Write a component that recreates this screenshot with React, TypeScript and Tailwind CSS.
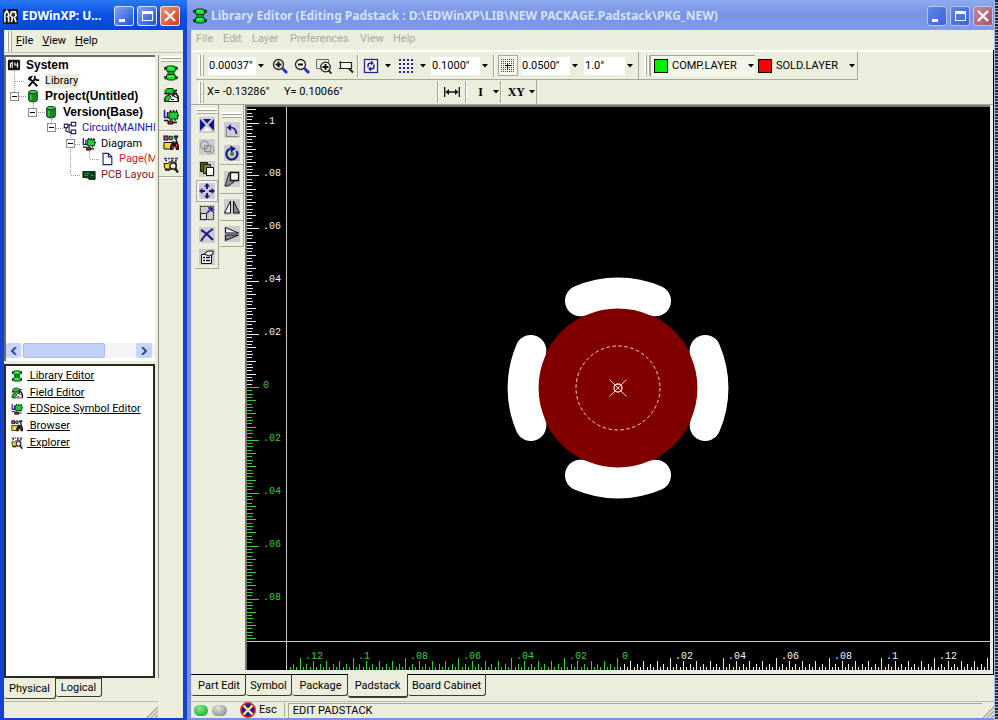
import type { ReactNode } from "react";

const UI = "font-['Roboto','Liberation_Sans',sans-serif] text-[11px] leading-[14px]";
const TITLE = "font-['Noto_Sans','Open_Sans',sans-serif] text-[12px] leading-[16px] font-bold";

/* ---------- icons ---------- */

type IconProps = { size?: number };

function Svg({ size = 16, children, crisp = false }: IconProps & { children: ReactNode; crisp?: boolean }) {
  return (
    <svg width={size} height={size} viewBox="0 0 16 16" fill="none" aria-hidden="true" className="shrink-0" shapeRendering={crisp ? "crispEdges" : "auto"}>
      {children}
    </svg>
  );
}

function ChipIcon({ size }: IconProps) {
  return (
    <Svg size={size}>
      <path d="M1.500 2.500h13M1.500 13.500h13M2 2.500v2.500M14 2.500v2.500M2 11v2.500M14 11v2.500" stroke="#111" strokeWidth="1.400" />
      <rect x="3.500" y="1" width="9" height="6" rx="2" fill="#14dc2e" stroke="#06360b" />
      <rect x="3.500" y="9" width="9" height="6" rx="2" fill="#14dc2e" stroke="#06360b" />
      <path d="M5 6.500h6v3H5z" fill="#0da522" stroke="#06360b" strokeWidth="0.800" />
      <path d="M5.500 3h4M5.500 11.500h4" stroke="#8dff92" />
    </Svg>
  );
}

function FieldIcon({ size }: IconProps) {
  return (
    <Svg size={size}>
      <path d="M2 3.500 4 1.500h6l2 2-1 3H3z" fill="#19c92f" stroke="#0a3a10" />
      <path d="M1 6.500h3M10 5l4-2" stroke="#111" strokeWidth="1.400" />
      <path d="M1.500 14.500c-1-4 2-7 6-7.500l3 2 4 2 1 3.500z" fill="#fff" stroke="#111" />
      <path d="M2 13.500c0-3 2-5 4.500-5.500l1.500 2.500-3.500 4z" fill="#19c92f" stroke="#0a3a10" />
      <path d="M9 9l4-3 2.500 4.500v4" stroke="#111" strokeWidth="1.600" />
      <path d="M8 12.500h3" stroke="#111" />
    </Svg>
  );
}

function SymbolIcon({ size }: IconProps) {
  return (
    <Svg size={size}>
      <path d="M1.500 1v8M1.500 8.500H6M4.500 3v5" stroke="#1c1c8c" strokeWidth="1.500" />
      <path d="M6 3h8.500v7H6z" fill="#17cf32" stroke="#06360b" />
      <path d="M7.500 1v2M10.500 1v2M13.500 1v2M14.500 6.500H16M8 10v1.500M12 10v2" stroke="#111" strokeWidth="1.300" />
      <path d="M5 12h5v3H5z" fill="#b3211d" stroke="#111" />
      <path d="M10 13.500h4M1 11.500h4" stroke="#111" strokeWidth="1.300" />
    </Svg>
  );
}

function BrowserIcon({ size }: IconProps) {
  return (
    <Svg size={size}>
      <rect x="1" y="1" width="4" height="4" fill="#e31fd0" stroke="#111" />
      <circle cx="8" cy="3" r="2" fill="#19c92f" stroke="#111" />
      <path d="M11 1h4l-2 4z" fill="#2334c9" stroke="#111" />
      <path d="M1 7.500h8V14H1z" fill="#f3dd2a" stroke="#111" />
      <path d="M7 15v-4l3-5h1l1 2 1-3h1l2 6v4h-3l-1-4-2 4z" fill="#161616" />
      <path d="M13.500 9v3.500M9.500 10.500v3" stroke="#d8302a" />
    </Svg>
  );
}

function ExplorerIcon({ size }: IconProps) {
  return (
    <Svg size={size}>
      <path d="M1 1.500h3M5 1.500h2M8 1.500h3M12 1.500h3M2 3.500h2M8 3.500h2M12 3.500h2" stroke="#3d2a8c" strokeWidth="1.600" />
      <path d="M1 6.500h4l1-1.500h7v7H2z" fill="#f3dd2a" stroke="#111" />
      <circle cx="10" cy="9" r="3.200" fill="#e8e6d4" stroke="#111" strokeWidth="1.300" />
      <path d="m12 11.500 3 4" stroke="#111" strokeWidth="2.200" />
      <path d="M2 13h5" stroke="#111" strokeWidth="1.500" />
    </Svg>
  );
}

function AppIcon() {
  return (
    <Svg size={15}>
      <rect width="16" height="16" fill="#151515" />
      <path d="M2 14V5l2-3 2 3v9M4 8h2M9 14l1-5-2-2 1-4h4l1 4-2 2 2 5" stroke="#f4f4f4" strokeWidth="1.800" />
      <path d="M11 4v3" stroke="#d43a2a" />
    </Svg>
  );
}

function SystemIcon() {
  return (
    <Svg size={14}>
      <rect x="1" y="2" width="14" height="12" rx="1.500" fill="#141414" />
      <path d="M4 11V6.500L6 5v6M9 5v3h4M12 5v6" stroke="#f3f3f3" strokeWidth="1.300" />
    </Svg>
  );
}

function ToolsIcon() {
  return (
    <Svg size={14}>
      <path d="m3 14 8-9M13 14 6 7" stroke="#111" strokeWidth="2.200" />
      <path d="M2 6c1-3 3-4 6-4L6 5l1 2-2 1z" fill="#111" />
      <path d="M10 2v3l2 2h3" stroke="#111" strokeWidth="2" />
    </Svg>
  );
}

function CanIcon() {
  return (
    <Svg size={14}>
      <path d="M3 3.500v9c0 3 10 3 10 0v-9z" fill="#158a25" stroke="#073d10" />
      <ellipse cx="8" cy="3.500" rx="5" ry="2" fill="#3fc651" stroke="#073d10" />
      <path d="M5.500 6.500v6" stroke="#47d45c" strokeWidth="1.500" />
    </Svg>
  );
}

function CircuitIcon() {
  return (
    <Svg size={14}>
      <path d="M1.500 3.500h4v4h-4zM9.500 1.500h5v4h-5zM9.500 10.500h5v4h-5z" fill="#fff" stroke="#1f1f66" strokeWidth="1.300" />
      <path d="M5.500 4.500h4M7 5v8h2.500M3.500 8v4H6" stroke="#1f1f66" strokeWidth="1.300" />
    </Svg>
  );
}

function PageIcon() {
  return (
    <Svg size={14}>
      <path d="M3.500 1.500h6l4 4v9h-10z" fill="#fff" stroke="#23236e" strokeWidth="1.300" />
      <path d="M9.500 1.500v4h4" stroke="#23236e" strokeWidth="1.300" />
    </Svg>
  );
}

function PcbIcon() {
  return (
    <Svg size={14}>
      <path d="M1 4h14v9H8l-2-2H1z" fill="#0b3d17" stroke="#05200b" />
      <path d="M3 6h6M3 8.500h4M10 8.500h3" stroke="#23a03b" strokeWidth="1.300" />
    </Svg>
  );
}

function ZoomIcon({ plus = false }: { plus?: boolean }) {
  return (
    <Svg>
      <path d="m10.500 10.500 4.500 4.500" stroke="#2330d8" strokeWidth="2.800" />
      <circle cx="6.500" cy="6.500" r="5" fill="#f7f7ee" stroke="#222" strokeWidth="1.300" />
      <path d={plus ? "M3.500 6.500h6M6.500 3.500v6" : "M4 6.500h5"} stroke="#111" strokeWidth="2" />
    </Svg>
  );
}

function ZoomAreaIcon() {
  return (
    <Svg>
      <path d="M.5 10.500v-9h12v3M.5 10.500h4" stroke="#666" />
      <circle cx="9.500" cy="9" r="4.800" fill="#f7f7ee" stroke="#222" strokeWidth="1.300" />
      <path d="M6.500 9h6M9.500 6v6" stroke="#111" strokeWidth="1.800" />
      <path d="m12.500 12.500 3 3" stroke="#222" strokeWidth="1.800" />
    </Svg>
  );
}

function ZoomBoxIcon() {
  return (
    <Svg>
      <path d="M2.500 4.500h11v6h-11z" fill="#f7f7ee" stroke="#222" strokeWidth="1.200" />
      <path d="M1 4.500h3M2.500 3v3M1 10.500h3" stroke="#222" />
      <path d="m11 10.500 4 4" stroke="#222" strokeWidth="2" />
    </Svg>
  );
}

function RefreshIcon() {
  return (
    <Svg>
      <rect x="1.500" y="1.500" width="13" height="13" fill="#f5f8ff" stroke="#26268c" strokeWidth="1.300" />
      <path d="M5 9.500V7.500C5 6 6 5 8 5h1M11 6.500v2c0 1.500-1 2.500-3 2.500H7" stroke="#26268c" strokeWidth="1.500" />
      <path d="M8 2.500 11 5 8 7.500zM8 8.500 5 11l3 2.500z" fill="#26268c" />
    </Svg>
  );
}

function GridIcon() {
  return (
    <Svg crisp>
      {[1, 5, 9, 13].map((y) => [1, 5, 9, 13].map((x) => <rect key={`${x}-${y}`} x={x} y={y} width="2" height="2" fill="#26268c" />))}
    </Svg>
  );
}

function SnapIcon() {
  return (
    <Svg crisp>
      {[1, 3, 5, 7, 9, 11, 13].map((y) => [1, 3, 5, 7, 9, 11, 13].map((x) => <rect key={`${x}-${y}`} x={x} y={y} width="1" height="1" fill="#444" />))}
      <path d="M5 7.500h6M7.500 5v6" stroke="#111" strokeWidth="1.500" />
    </Svg>
  );
}

function WidthIcon() {
  return (
    <Svg>
      <path d="M.7 3v10M15.300 3v10M2 8h12" stroke="#111" strokeWidth="1.300" />
      <path d="M1.500 8 5 5v6zM14.500 8 11 5v6z" fill="#111" />
    </Svg>
  );
}

function Plate({ children }: { children: ReactNode }) {
  return (
    <Svg>
      <rect width="16" height="16" fill="#cbcbd0" />
      {children}
    </Svg>
  );
}

const NAVY = "#17178a";

const editTools: { name: string; icon: ReactNode; active?: boolean }[] = [
  { name: "Fit", icon: <Plate><path d="M1 2l5.500 6L1 14zM15 2 9.500 8l5.500 6zM4 2h8L8 6.500z" fill={NAVY} /><path d="M4 14h8l-4-4.500z" fill="#fff" /></Plate> },
  { name: "Combine", icon: <Plate><circle cx="5.500" cy="6" r="4" stroke="#888" /><path d="M5.500 6.500h6v6h-6z" stroke="#888" /><circle cx="11" cy="10.500" r="4" stroke="#999" /></Plate> },
  { name: "Copy", icon: <Plate><path d="M1.500 1.500h7v9h-7z" fill="#55611b" stroke="#1a1f05" /><path d="M4.500 3.500h7v9h-7z" fill="#7a8830" stroke="#1a1f05" /><path d="M7.500 6.500h7v8h-7z" fill="#fff" stroke="#111" /></Plate> },
  { name: "Move", active: true, icon: <Plate><path d="M8 0l3 3.500H9V6H7V3.500H5zM8 16l3-3.500H9V10H7v2.500H5zM0 8l3.500-3v2H6v2H3.500v2zM16 8l-3.500-3v2H10v2h2.500v2z" fill={NAVY} /></Plate> },
  { name: "Resize", icon: <Plate><path d="M1.500 1.500h13v13h-13z" stroke="#222" strokeDasharray="2 1" /><path d="M1.500 8.500h6v6h-6z" fill="#ddd" stroke="#222" /><path d="m8 8 5-5M9 3h4v4" stroke={NAVY} strokeWidth="1.500" /></Plate> },
  { name: "Delete", icon: <Plate><path d="M2 3c4 2 8 6 12 10M14 2C9 5 5 9 2 14" stroke={NAVY} strokeWidth="2" /></Plate> },
  { name: "Properties", icon: <Plate><path d="M2.500 5.500h10v9h-10z" fill="#fff" stroke="#111" /><path d="M4 8.500h2M7 8.500h4M4 11.500h2M7 11.500h4" stroke="#111" strokeWidth="1.300" /><path d="M5 5l4-3h5v3l-4 2z" fill="#eee" stroke="#111" /></Plate> },
];

const turnTools: { name: string; icon: ReactNode; cell: string }[] = [
  { name: "Rotate left", cell: "h-[23px]", icon: <Plate><path d="M2.500 4v10.500h12" stroke="#888" /><path d="M6 5.500c4-.5 6 2 6.500 6.500" stroke={NAVY} strokeWidth="1.500" /><path d="M3 5.500 7 2v7z" fill={NAVY} /></Plate> },
  { name: "Rotate", cell: "h-[24px] border-b border-[#aca899]", icon: <Plate><path d="M6 3.800A5.500 5.500 0 1 0 12.500 6" stroke={NAVY} strokeWidth="2.200" /><path d="M6 0.500l6 3-5 4z" fill={NAVY} /><circle cx="8" cy="9" r="2" fill="#149a27" /></Plate> },
  { name: "Skew", cell: "h-[29px] border-b border-[#aca899]", icon: <Plate><path d="M1 15 5 2h5v9L4 15z" fill="#8b8b8b" stroke="#222" /><path d="M6.500 1.500h8v8h-8z" fill="#fff" stroke="#111" strokeWidth="1.300" /></Plate> },
  { name: "Mirror horizontally", cell: "h-[27px] border-b border-[#aca899]", icon: <Plate><path d="M6.500 2v12h-6z" fill="#fff" stroke="#111" /><path d="M9.500 2v12h6z" fill="#888" stroke="#111" /></Plate> },
  { name: "Mirror vertically", cell: "h-[26px] border-b border-[#aca899]", icon: <Plate><path d="M1.500 1.500v5.500h13z" fill="#eee" stroke="#111" /><path d="M1.500 14.500V9h13z" fill="#888" stroke="#111" /></Plate> },
];

/* ---------- small parts ---------- */

function Arrow() {
  return (
    <svg width="9" height="6" viewBox="0 0 9 6" className="pointer-events-none shrink-0" aria-hidden="true">
      <path d="M2 1h6L5 4.500z" fill="#000" />
    </svg>
  );
}

function Combo({ label, value, width }: { label: string; value: string; width: string }) {
  return (
    <label className="flex items-center">
      <select aria-label={label} className={`${width} h-[18px] appearance-none pl-px text-[11px] leading-[18px] text-black outline-none`}>
        <option>{value}</option>
      </select>
      <Arrow />
    </label>
  );
}

function Sep() {
  return <span className="h-[22px] w-[2px] shrink-0 border-l border-[#aca899] bg-white" />;
}

function Grip() {
  return (
    <span className="flex h-[21px] w-[6px] shrink-0 gap-px">
      <span className="w-[3px] border-r border-[#aca899] bg-white" />
      <span className="w-[2px] border-r border-[#aca899] bg-white" />
    </span>
  );
}

function GripH() {
  return (
    <span className="flex h-[6px] w-[20px] shrink-0 flex-col gap-px">
      <span className="h-[3px] border-b border-[#aca899] bg-white" />
      <span className="h-[2px] border-b border-[#aca899] bg-white" />
    </span>
  );
}

function CaptionButtons({ active }: { active: boolean }) {
  const blue = active
    ? "border-white/80 bg-linear-to-br from-[#7ea2f5] to-[#2450d8]"
    : "border-[#b4c5f3] bg-linear-to-br from-[#5f86e8] to-[#3d63d8]";
  const red = active
    ? "border-white/80 bg-linear-to-br from-[#f0906f] to-[#cf3a14]"
    : "border-[#b4c5f3] bg-linear-to-br from-[#c28a9c] to-[#a95468]";
  const shape = "flex h-[20px] w-[20px] items-center justify-center rounded-[3px] border";
  return (
    <div className="flex shrink-0 gap-[3px]">
      <button aria-label="Minimize" className={`${shape} ${blue}`}>
        <svg width="14" height="14" aria-hidden="true"><path d="M2 10h6v3H2z" fill="#fff" /></svg>
      </button>
      <button aria-label="Maximize" className={`${shape} ${blue}`}>
        <svg width="14" height="14" aria-hidden="true"><path d="M2 2h11v10H2zm1 3v6h9V5z" fill="#fff" fillRule="evenodd" /></svg>
      </button>
      <button aria-label="Close" className={`${shape} ${red}`}>
        <svg width="14" height="14" aria-hidden="true"><path d="m2 2 10 10M12 2 2 12" stroke="#fff" strokeWidth="2.200" /></svg>
      </button>
    </div>
  );
}

function SizeGrip() {
  return (
    <svg width="12" height="12" viewBox="0 0 12 12" className="shrink-0 self-end" aria-hidden="true">
      <path d="M1 12 12 1M5 12l7-7M9 12l3-3" stroke="#a5a28f" strokeWidth="1.300" />
    </svg>
  );
}

/* ---------- left window ---------- */

const tree: { text: string; icon: ReactNode; pad: string; style?: string; box?: boolean }[] = [
  { text: "System", icon: <SystemIcon />, pad: "pl-[1px]", style: "font-['Liberation_Sans',sans-serif] text-[12px] font-bold" },
  { text: "Library", icon: <ToolsIcon />, pad: "pl-[20px]", style: "bg-[#eceedd]" },
  { text: "Project(Untitled)", icon: <CanIcon />, pad: "pl-[4px]", style: "font-['Liberation_Sans',sans-serif] text-[12px] font-bold", box: true },
  { text: "Version(Base)", icon: <CanIcon />, pad: "pl-[22px]", style: "font-['Liberation_Sans',sans-serif] text-[12px] font-bold", box: true },
  { text: "Circuit(MAINHI", icon: <CircuitIcon />, pad: "pl-[41px]", style: "text-[#1717b4]", box: true },
  { text: "Diagram", icon: <SymbolIcon size={14} />, pad: "pl-[60px]", box: true },
  { text: "Page(M", icon: <PageIcon />, pad: "pl-[94px]", style: "text-[#c81e1e]" },
  { text: "PCB Layou", icon: <PcbIcon />, pad: "pl-[76px]", style: "text-[#8c1414]" },
];

const editors: { text: string; icon: ReactNode }[] = [
  { text: "Library Editor", icon: <ChipIcon size={12} /> },
  { text: "Field Editor", icon: <FieldIcon size={12} /> },
  { text: "EDSpice Symbol Editor", icon: <SymbolIcon size={12} /> },
  { text: "Browser", icon: <BrowserIcon size={12} /> },
  { text: "Explorer", icon: <ExplorerIcon size={12} /> },
];

function ProjectTree() {
  return (
    <div className="flex h-[306px] flex-col overflow-hidden border-t-2 border-l-2 border-[#6e6c60] bg-white">
      <div className="relative min-h-0 flex-1">
        <svg className="absolute top-0 left-0" width="120" height="126" aria-hidden="true">
          <path d="M8.500 14v22M9 24.500h10M13 39.500h8M27.500 46v5M32 55.500h7M45.500 62v6M50 71.500h7M64.500 76v7M69 87.500h6M64.500 92v26M65 118.500h10M83.500 94v8M84 102.500h10" stroke="#999" strokeDasharray="1 1" fill="none" />
        </svg>
        <ul className="relative grid h-[126px] grid-rows-8">
          {tree.map((n) => (
            <li key={n.text} className={`flex items-center whitespace-nowrap ${n.pad}`}>
              {n.box && (
                <button aria-label={`Collapse ${n.text}`} className="mr-[7px] flex h-[9px] w-[9px] shrink-0 items-center justify-center border border-[#8c8c8c] bg-white">
                  <span className="h-px w-[5px] bg-black" />
                </button>
              )}
              {n.icon}
              <span className={`ml-[5px] ${n.style ?? ""}`}>{n.text}</span>
            </li>
          ))}
        </ul>
      </div>
      <div className="mb-[3px] flex h-[15px] bg-[#f4f4f8]">
        <button aria-label="Scroll left" className="flex w-[15px] items-center justify-center rounded-[2px] bg-[#c6d4fb]">
          <svg width="8" height="8" aria-hidden="true"><path d="M6 0 2 4l4 4" stroke="#3a4d80" strokeWidth="2" fill="none" /></svg>
        </button>
        <div className="flex flex-1 pl-[2px]">
          <div className="w-[82px] rounded-[2px] border border-[#a9bdf3] bg-[#c3d1fa]" />
        </div>
        <button aria-label="Scroll right" className="mr-[3px] flex w-[16px] items-center justify-center rounded-[2px] bg-[#c6d4fb]">
          <svg width="8" height="8" aria-hidden="true"><path d="m2 0 4 4-4 4" stroke="#3a4d80" strokeWidth="2" fill="none" /></svg>
        </button>
      </div>
    </div>
  );
}

function ManagerWindow() {
  return (
    <section className="flex w-[187px] shrink-0 flex-col border-r-4 border-b-2 border-l-4 border-[#1443d2] bg-[#eceedd]">
      <header className="-mx-1 flex h-[30px] shrink-0 items-center bg-linear-to-b from-[#2a7af5] via-[#0a50e0] to-[#0a47d8] pt-[2px] pr-[7px] pl-[3px]">
        <AppIcon />
        <h1 className={`${TITLE} ml-[4px] flex-1 whitespace-nowrap text-white`}>EDWinXP: U...</h1>
        <CaptionButtons active />
      </header>
      <nav className="flex h-[23px] shrink-0 items-center border-b border-[#c5c2b2] pl-[2px]">
        <Grip />
        <button className="ml-[4px]"><u>F</u>ile</button>
        <button className="ml-[9px]"><u>V</u>iew</button>
        <button className="ml-[9px]"><u>H</u>elp</button>
      </nav>
      <div className="flex min-h-0 flex-1 pt-[2px]">
        <div className="flex min-w-0 flex-1 flex-col">
          <ProjectTree />
          <div className="mt-[3px] flex-1 border-2 border-[#2b2a22] bg-white pt-[2px]">
            <ul className="grid h-[83px] grid-rows-5">
              {editors.map((e) => (
                <li key={e.text} className="flex items-center pl-[5px]">
                  {e.icon}
                  <a href="#" className="ml-[4px] whitespace-pre underline">{` ${e.text}`}</a>
                </li>
              ))}
            </ul>
          </div>
        </div>
        <div className="ml-[3px] flex w-[25px] flex-col items-center border-l border-[#8d8b7c] pt-px">
          <GripH />
          <button aria-label="Library Editor" className="flex h-[22px] items-center"><ChipIcon /></button>
          <button aria-label="Field Editor" className="flex h-[22px] items-center"><FieldIcon /></button>
          <button aria-label="EDSpice Symbol Editor" className="flex h-[22px] items-center"><SymbolIcon /></button>
          <span className="mt-[2px] h-[2px] w-full border-t border-[#aca899] bg-white" />
          <button aria-label="Browser" className="flex h-[22px] items-center"><BrowserIcon /></button>
          <button aria-label="Explorer" className="flex h-[22px] items-center"><ExplorerIcon /></button>
          <span className="h-[2px] w-full border-t border-[#aca899] bg-white" />
        </div>
      </div>
      <div role="tablist" className="flex h-[22px] shrink-0 items-start">
        <button role="tab" aria-selected="true" className="h-[21px] w-[52px] rounded-b-[3px] border-r border-b border-[#3c3b33] pt-[2px]">Physical</button>
        <button role="tab" className="h-[19px] w-[46px] rounded-b-[3px] border-t border-r border-b border-[#3c3b33] pt-px">Logical</button>
      </div>
      <footer className="mt-px mr-[25px] flex h-[17px] shrink-0 justify-end border-t border-[#bcb9a8]">
        <SizeGrip />
      </footer>
    </section>
  );
}

/* ---------- ruler and drawing ---------- */

const STEP = 3.305;
const tickLength = (i: number) => (i % 16 === 0 ? 12 : i % 4 === 0 ? 9 : i % 2 === 0 ? 6 : 3);
const MONO = "font-['Liberation_Mono',monospace] text-[10px]";
const GREEN = "#2fd03c";
const names = ["0", ".02", ".04", ".06", ".08", ".1", ".12"];
const range = (a: number, b: number) => Array.from({ length: b - a + 1 }, (_, i) => a + i);

function VerticalRuler() {
  const zero = 280;
  return (
    <svg width="39" height="100%" className="bg-black" role="img" aria-label="Vertical ruler">
      <g shapeRendering="crispEdges">
        {range(-84, 76).map((i) => (
          <rect key={i} x="0" y={Math.round(zero + i * STEP)} width={tickLength(i) === 3 ? 5 : tickLength(i)} height="1" fill={i < 0 ? "#e8e8e8" : GREEN} />
        ))}
      </g>
      {range(-5, 4).map((k) => (
        <text key={k} x="16" y={Math.round(zero + k * STEP * 16) + 1} fill={k < 0 ? "#f2f2f2" : GREEN} className={MONO}>
          {names[Math.abs(k)]}
        </text>
      ))}
    </svg>
  );
}

function HorizontalRuler() {
  const zero = 330;
  return (
    <svg width="100%" height="28" className="min-w-0 bg-black" role="img" aria-label="Horizontal ruler">
      <g shapeRendering="crispEdges">
        {range(-99, 112).map((i) => (
          <rect key={i} x={Math.round(zero + i * STEP)} y={28 - tickLength(i)} width="1" height={tickLength(i)} fill={i < 1 ? GREEN : "#e8e8e8"} />
        ))}
      </g>
      {range(-6, 6).map((k) => (
        <text key={k} x={Math.round(zero + k * STEP * 16) + 5} y="17" fill={k < 1 ? GREEN : "#f2f2f2"} className={MONO}>
          {names[Math.abs(k)]}
        </text>
      ))}
    </svg>
  );
}

function Padstack() {
  return (
    <svg width="100%" height="100%" className="min-w-0 bg-black" role="img" aria-label="Padstack with thermal relief">
      <g transform="translate(331 281)">
        <circle r="80" fill="#800000" />
        {[0, 90, 180, 270].map((a) => (
          <path key={a} d="M-37.500-87.200A94.900 94.900 0 0 1 37.500-87.200" transform={`rotate(${a})`} stroke="#fff" strokeWidth="31" strokeLinecap="round" fill="none" />
        ))}
        <circle r="42" fill="none" stroke="#ffd0d0" strokeDasharray="3.500 2.500" />
        <path d="M-8.500-8.500l17 17M8.500-8.500l-17 17" stroke="#ffd6d6" />
        <circle r="4" fill="none" stroke="#ffd6d6" strokeWidth="1.300" />
      </g>
    </svg>
  );
}

/* ---------- right window ---------- */

const menus: [string, string][] = [
  ["File", "w-[27px]"],
  ["Edit", "w-[29px]"],
  ["Layer", "w-[38px]"],
  ["Preferences", "w-[70px]"],
  ["View", "w-[33px]"],
  ["Help", "w-[30px]"],
];

const tabs: [string, string, boolean][] = [
  ["Part Edit", "w-[55px] pl-[2px]", false],
  ["Symbol", "w-[46px]", false],
  ["Package", "w-[56px] pl-[2px]", false],
  ["Padstack", "w-[60px]", true],
  ["Board Cabinet", "w-[78px]", false],
];

function Toolbars() {
  return (
    <div className="shrink-0 border-t-2 border-white bg-[#eceedd] pl-[5px]">
      <div className="flex h-[28px]">
        <div className="flex items-center border-r border-b border-[#aca899] pr-[4px] pl-[2px]">
          <Grip />
          <span className="w-[4px]" />
          <Combo label="Zoom factor" value={'0.00037"'} width="w-[48px] bg-white" />
          <span className="w-[4px]" />
          <button aria-label="Zoom in" className="flex w-[22px] justify-center"><ZoomIcon plus /></button>
          <button aria-label="Zoom out" className="flex w-[22px] justify-center"><ZoomIcon /></button>
          <button aria-label="Zoom area" className="flex w-[22px] justify-center"><ZoomAreaIcon /></button>
          <button aria-label="Zoom window" className="flex w-[22px] justify-center"><ZoomBoxIcon /></button>
          <Sep />
          <button aria-label="Refresh" className="flex w-[33px] items-center gap-[4px] pl-[4px]"><RefreshIcon /><Arrow /></button>
          <span className="w-[2px]" />
          <button aria-label="Grid" className="flex w-[33px] items-center gap-[4px] pl-[4px]"><GridIcon /><Arrow /></button>
          <span className="w-[4px]" />
          <Combo label="Grid size" value={'0.1000"'} width="w-[49px] bg-white" />
          <span className="w-[4px]" />
          <Sep />
          <button aria-label="Snap" aria-pressed="true" className="mx-[3px] flex h-[21px] w-[20px] items-center justify-center border border-[#aca899] bg-[#f6f5ee]"><SnapIcon /></button>
          <Combo label="Snap size" value={'0.0500"'} width="w-[49px] bg-white" />
          <span className="w-[5px]" />
          <Combo label="Angle" value="1.0°" width="w-[41px] bg-white" />
        </div>
        <div className="flex items-center border-r border-b border-[#aca899] pl-[5px]">
          <Grip />
          <div className="flex h-[22px] items-center border-t border-l border-[#aca899] bg-[#f4f5e9] pl-[3px]">
            <span className="mr-[3px] h-[14px] w-[14px] border border-black bg-[#00f000]" />
            <Combo label="Component layer" value="COMP.LAYER" width="w-[75px]" />
          </div>
          <span className="mr-[3px] ml-[3px] h-[14px] w-[14px] border border-black bg-[#fa0000]" />
          <Combo label="Solder layer" value="SOLD.LAYER" width="w-[72px]" />
          <span className="w-px" />
        </div>
      </div>
      <div className="flex h-[24px]">
        <div className="flex items-center border-r border-[#aca899] pl-[2px]">
          <Grip />
          <output className="ml-[3px] w-[77px] whitespace-nowrap">{'X= -0.13286"'}</output>
          <output className="w-[153px] whitespace-nowrap">{'Y= 0.10066"'}</output>
          <Sep />
          <button aria-label="Measure" className="flex w-[26px] justify-center"><WidthIcon /></button>
          <Sep />
          <button className="flex w-[33px] items-center justify-end font-['Liberation_Serif',serif] text-[12px] font-bold">
            I<span className="w-[8px]" /><Arrow />
          </button>
          <Sep />
          <button className="flex w-[34px] items-center justify-end font-['Liberation_Serif',serif] text-[12px] font-bold">
            XY<span className="w-[2px]" /><Arrow />
          </button>
        </div>
      </div>
    </div>
  );
}

function LibraryWindow() {
  return (
    <section className="flex min-w-0 flex-1 flex-col border-b-2 border-l-4 border-[#7b8fe0] bg-[#eceedd]">
      <header className="-ml-1 flex h-[30px] shrink-0 items-center bg-linear-to-b from-[#8fa9ee] via-[#7895e4] to-[#809bea] pt-[2px] pr-px pl-[5px]">
        <ChipIcon />
        <h1 className={`${TITLE} ml-[3px] min-w-0 flex-1 truncate text-[#d6e2fb]`}>
          Library Editor (Editing Padstack : D:\EDWinXP\LIB\NEW PACKAGE.Padstack\PKG_NEW)
        </h1>
        <CaptionButtons active={false} />
      </header>
      <nav className="flex h-[20px] shrink-0 items-start pt-[2px] pl-[5px]">
        {menus.map(([name, width]) => (
          <button key={name} className={`${width} text-left text-[#aaa899]`}>{name}</button>
        ))}
      </nav>
      <div className="flex min-h-0 flex-1 flex-col border-r border-b border-black">
        <Toolbars />
        <div className="flex min-h-0 flex-1 border-t border-[#aca899] pr-[3px] pb-[4px]">
          <div className="flex w-[54px] shrink-0 items-start pl-[4px]">
            <div className="flex w-[24px] flex-col items-center border-r border-b border-[#aca899] pt-[3px]">
              <GripH />
              {editTools.map((t) => (
                <button key={t.name} aria-label={t.name} className={`flex h-[22px] w-[22px] items-center justify-center ${t.active ? "border border-[#aca899] bg-[#f6f5ee]" : ""}`}>
                  {t.icon}
                </button>
              ))}
            </div>
            <div className="ml-[1px] flex w-[24px] flex-col items-center border-r border-[#aca899] pt-[7px]">
              <GripH />
              {turnTools.map((t) => (
                <button key={t.name} aria-label={t.name} className={`flex w-full items-center justify-center ${t.cell}`}>
                  {t.icon}
                </button>
              ))}
            </div>
          </div>
          <div className="grid min-w-0 flex-1 grid-cols-[39px_minmax(0,1fr)] grid-rows-[minmax(0,1fr)_28px] gap-px border-t-2 border-l-2 border-[#77756a] bg-[#c9c9c9]">
            <VerticalRuler />
            <Padstack />
            <div className="bg-black" />
            <HorizontalRuler />
          </div>
        </div>
      </div>
      <div role="tablist" className="flex h-[26px] shrink-0 items-start">
        {tabs.map(([name, width, on]) => (
          <button
            key={name}
            role="tab"
            aria-selected={on}
            className={`${width} rounded-b-[3px] border-r border-b border-[#3c3b33] ${on ? "-mt-px h-[24px] border-b-2 bg-[#eceedd] pt-[2px]" : "h-[21px] pt-px"}`}
          >
            {name}
          </button>
        ))}
      </div>
      <footer className="flex h-[17px] shrink-0 items-center border-t border-[#bcb9a8]">
        <span className="ml-[3px] h-[11px] w-[14px] rounded-full bg-radial-[at_40%_30%] from-[#7cf08a] to-[#0b9a1f]" />
        <span className="ml-[4px] h-[11px] w-[15px] rounded-full bg-radial-[at_40%_30%] from-[#e4e4e4] to-[#7a7a7a]" />
        <button className="ml-[13px] flex items-center gap-[3px]">
          <svg width="16" height="16" viewBox="0 0 16 16" aria-hidden="true">
            <circle cx="8" cy="8" r="7" fill="#1c1c9c" stroke="#d81c1c" strokeWidth="1.800" />
            <path d="m3.500 3.500 9 9M12.500 3.500l-9 9" stroke="#ffe98a" strokeWidth="2.400" />
          </svg>
          Esc
        </button>
        <span className="ml-[7px] h-[14px] w-px bg-[#aca899]" />
        <span className="ml-[3px] flex h-[15px] flex-1 items-center border-t border-l border-[#aca899] pl-[4px]">EDIT PADSTACK</span>
        <SizeGrip />
      </footer>
    </section>
  );
}

export default function App() {
  return (
    <main className={`${UI} flex h-screen w-full overflow-hidden bg-[#eceedd] text-black`}>
      <ManagerWindow />
      <LibraryWindow />
      <div className="w-[4px] shrink-0 border-l border-[#a9bdf3] bg-[repeating-linear-gradient(to_bottom,#222_0_2px,#8a948c_2px_3px,#3b443e_3px_5px,#b4bab4_5px_6px)]" />
    </main>
  );
}
